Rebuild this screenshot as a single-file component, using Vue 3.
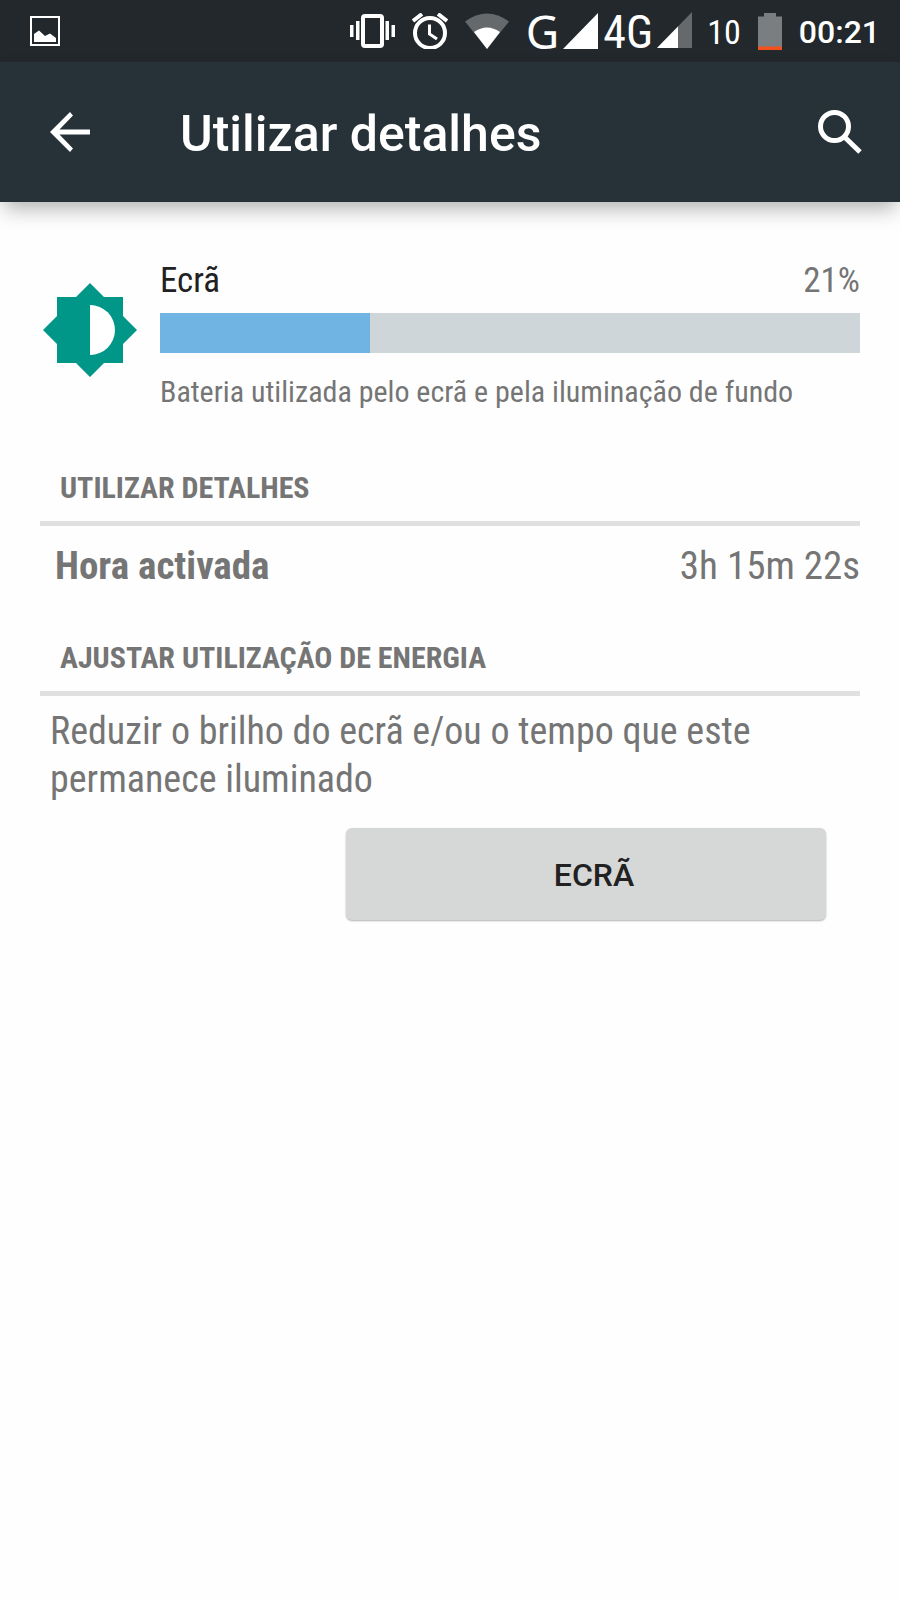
<template>
  <div class="screen">
    <div class="status-bar">
      <svg class="notification" width="30" height="30" viewBox="0 0 30 30">
        <rect x="1" y="1" width="28" height="28" fill="none" stroke="#fff" stroke-width="2" />
        <path d="M4 26V18L9 14.500L15 20L20 17.500L26 22V26Z" fill="#fff" />
      </svg>
      <div class="status-icons">
        <svg class="vibrate" width="45" height="36" viewBox="0 0 45 36">
          <rect x="13" y="3" width="19" height="30" rx="2" fill="none" stroke="#fff" stroke-width="4" />
          <path d="M0 12h3.500v12H0zM6 8h3.500v19H6zM35.500 8H39v19h-3.500zM41.500 12H45v12h-3.500z" fill="#fff" />
        </svg>
        <svg class="alarm" width="36" height="36" viewBox="0 0 36 36" fill="none" stroke="#fff">
          <circle cx="18" cy="20" r="15" stroke-width="4" />
          <path d="M1 8L10 1M35 8L26 1" stroke-width="4" />
          <path d="M17.500 11.500V21L25 26" stroke-width="3" />
        </svg>
        <svg class="wifi" width="44" height="36" viewBox="0 0 44 36">
          <path d="M22 36L0 8.500Q22 -7.500 44 8.500Z" fill="#65696b" />
          <path d="M22 36L9 19Q22 10 35 19Z" fill="#fff" />
        </svg>
        <div class="signal">
          <span class="network">G</span>
          <svg width="35" height="36" viewBox="0 0 35 36"><path d="M0 36L35 0V36Z" fill="#fff" /></svg>
        </div>
        <div class="signal">
          <span class="network narrow">4G</span>
          <svg width="35" height="36" viewBox="0 0 35 36">
            <path d="M0 36L35 0V36Z" fill="#65696b" />
            <path d="M0 36L21 14.400V36Z" fill="#fff" />
          </svg>
        </div>
        <span class="battery-level">10</span>
        <svg class="battery" width="24" height="37" viewBox="0 0 24 37">
          <path d="M0 3.500H6V0H18V3.500H24V37H0Z" fill="#7b7e80" />
          <path d="M0 33.500H24V37H0Z" fill="#f4511e" />
        </svg>
        <span class="clock">00:21</span>
      </div>
    </div>

    <header class="app-bar">
      <button class="icon-btn" type="button" aria-label="Voltar">
        <svg width="40" height="40" viewBox="0 0 40 40">
          <path d="M40 17.500H9.500L23 3.500L20 0L0 20L20 40L23 36.500L9.500 22.500H40Z" fill="#fff" />
        </svg>
      </button>
      <h1 class="title">{{ title }}</h1>
      <button class="icon-btn" type="button" aria-label="Pesquisar">
        <svg width="44" height="44" viewBox="0 0 44 44" fill="none" stroke="#fff">
          <circle cx="16.500" cy="16.500" r="14" stroke-width="5" />
          <path d="M26.500 27L42 42" stroke-width="5" />
        </svg>
      </button>
    </header>

    <main class="content">
      <section class="usage">
        <svg class="usage-icon" width="94" height="94" viewBox="0 0 94 94">
          <path d="M47 0L61 14H80V33L94 47L80 61V80H61L47 94L33 80H14V61L0 47L14 33V14H33Z" fill="#009688" />
          <path d="M47 22A25 25 0 0 1 47 72Z" fill="#fff" />
        </svg>
        <div class="usage-info">
          <div class="usage-top">
            <span class="usage-name">{{ usage.name }}</span>
            <span>{{ usage.percent }}%</span>
          </div>
          <div class="bar">
            <div class="bar-fill" :style="{ width: usage.fill + '%' }"></div>
          </div>
          <p class="usage-desc">{{ usage.description }}</p>
        </div>
      </section>

      <section class="group">
        <h2 class="group-title">Utilizar detalhes</h2>
        <dl v-for="item in details" :key="item.label" class="detail">
          <dt>{{ item.label }}</dt>
          <dd>{{ item.value }}</dd>
        </dl>
      </section>

      <section class="group">
        <h2 class="group-title">Ajustar utilização de energia</h2>
        <p class="hint">Reduzir o brilho do ecrã e/ou o tempo que este permanece iluminado</p>
        <div class="actions">
          <button class="action-btn" type="button">ECRÃ</button>
        </div>
      </section>
    </main>
  </div>
</template>

<script setup>
const title = "Utilizar detalhes";

// fill is relative to the biggest consumer, not to the whole battery
const usage = {
  name: "Ecrã",
  percent: 21,
  fill: 30,
  description: "Bateria utilizada pelo ecrã e pela iluminação de fundo",
};

const details = [{ label: "Hora activada", value: "3h 15m 22s" }];
</script>

<style>
body {
  margin: 0;
  background: #fefefe;
}
</style>

<style scoped>
.screen {
  min-height: 100vh;
  font-family: "Roboto Condensed", "Liberation Sans Narrow", Roboto, sans-serif;
  color: #757575;
}

h1,
h2,
p,
dl,
dd {
  margin: 0;
}

svg {
  display: block;
  flex-shrink: 0;
}

button {
  border: 0;
  font-family: Roboto, sans-serif;
  cursor: pointer;
}

.status-bar {
  display: flex;
  align-items: center;
  justify-content: space-between;
  height: 62px;
  padding: 0 20px 0 30px;
  background: #22282c;
  color: #fff;
}

.status-icons {
  display: flex;
  align-items: center;
  gap: 17px;
}

.signal {
  display: flex;
  align-items: baseline;
  gap: 4px;
}

.signal + .signal {
  margin: 0 -2px 0 -12px;
}

.network {
  font-family: "Noto Sans", sans-serif;
  font-size: 46px;
  line-height: 36px;
}

.network.narrow {
  font-family: "Roboto Condensed", "Liberation Sans Narrow", sans-serif;
}

.battery-level {
  padding-top: 2px;
  font-size: 34px;
}

.clock {
  padding-top: 2px;
  font-family: Roboto, sans-serif;
  font-size: 32px;
  font-weight: 500;
}

.app-bar {
  display: flex;
  align-items: center;
  height: 140px;
  padding: 0 38px 0 50px;
  background: #263238;
  box-shadow: 0 10px 20px -4px rgba(0, 0, 0, 0.32);
}

.icon-btn {
  padding: 0;
  background: none;
}

.title {
  flex: 1;
  margin-left: 90px;
  padding-top: 4px;
  font-family: Roboto, sans-serif;
  font-size: 50px;
  font-weight: 500;
  color: #fff;
}

.content {
  padding: 57px 40px;
}

.usage {
  display: flex;
  align-items: flex-start;
  gap: 23px;
  padding-left: 3px;
}

.usage-icon {
  margin-top: 24px;
}

.usage-info {
  flex: 1;
  min-width: 0;
}

.usage-top {
  display: flex;
  justify-content: space-between;
  font-size: 35px;
  line-height: 44px;
}

.usage-name {
  color: #212121;
}

.bar {
  height: 40px;
  margin: 10px 0 19px;
  background: #ced6da;
}

.bar-fill {
  height: 100%;
  background: #6fb4e2;
}

.usage-desc {
  font-size: 30px;
  line-height: 40px;
}

.group {
  margin-top: 48px;
}

.usage + .group {
  margin-top: 56px;
}

.group-title {
  padding: 0 20px 13px;
  border-bottom: 5px solid #e0e0e0;
  font-size: 30px;
  line-height: 40px;
  font-weight: 700;
  text-transform: uppercase;
}

.detail {
  display: flex;
  justify-content: space-between;
  padding: 16px 0 0 15px;
  font-size: 39px;
  line-height: 48px;
}

.detail dt {
  font-weight: 700;
}

.hint {
  padding: 11px 10px 0;
  font-size: 38px;
  line-height: 48px;
}

.actions {
  display: flex;
  justify-content: flex-end;
  padding: 25px 34px 0;
}

.action-btn {
  width: 480px;
  max-width: 100%;
  height: 92px;
  padding: 2px 0 0 16px;
  border-radius: 6px;
  background: #d6d7d7;
  box-shadow: 0 1px 2px rgba(0, 0, 0, 0.3);
  font-size: 32px;
  font-weight: 500;
  color: #212121;
}
</style>
